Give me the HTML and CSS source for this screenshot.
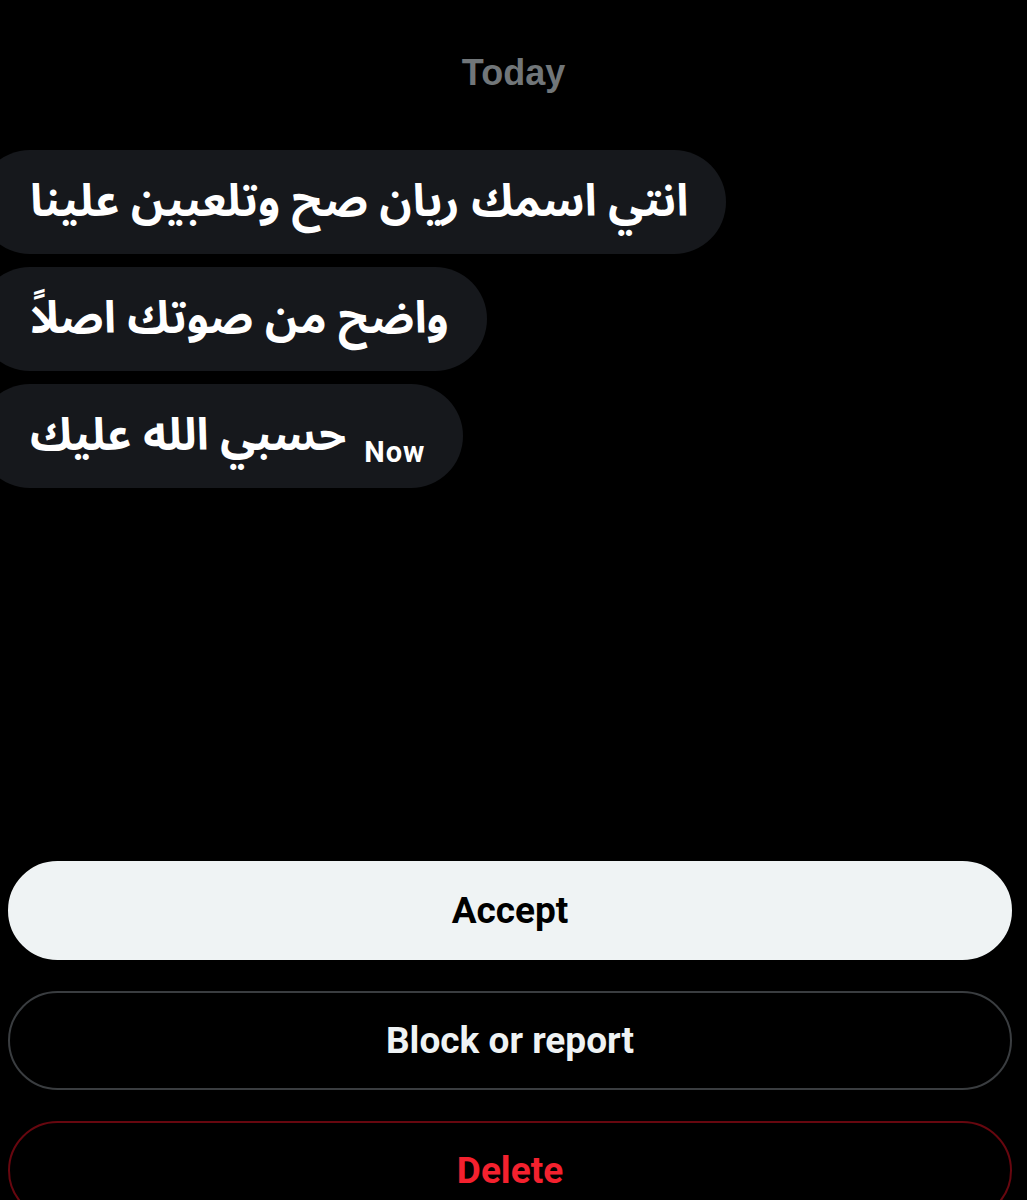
FILE: index.html
```html
<!DOCTYPE html>
<html lang="en">
<head>
    <meta charset="UTF-8">
    <meta name="viewport" content="width=device-width, initial-scale=1.0">
    <title>Message request</title>
    <link rel="stylesheet" href="styles.css">
</head>
<body>
    <div class="screen">
        <p class="day">Today</p>

        <div class="thread">
            <div class="bubble"><span class="msg">انتي اسمك ريان صح وتلعبين علينا</span></div>
            <div class="bubble"><span class="msg">واضح من صوتك اصلاً</span></div>
            <div class="bubble"><span class="time">Now</span><span class="msg">حسبي الله عليك</span></div>
        </div>

        <div class="actions">
            <button class="btn btn-accept">Accept</button>
            <button class="btn btn-block">Block or report</button>
            <button class="btn btn-delete">Delete</button>
        </div>
    </div>
</body>
</html>
```

FILE: styles.css
```css
* {
    margin: 0;
    padding: 0;
    box-sizing: border-box;
}
body {
    background-color: #000;
    overflow: hidden;
    font-family: Roboto, "Liberation Sans", sans-serif;
}
.screen {
    height: 1200px;
    display: flex;
    flex-direction: column;
}
.day {
    text-align: center;
    color: #717679;
    font-family: "Liberation Sans", Arial, sans-serif;
    font-size: 36px;
    font-weight: bold;
    padding-top: 52px;
    line-height: 42px;
}
.thread {
    display: flex;
    flex-direction: column;
    align-items: flex-start;
    gap: 13px;
    margin-top: 56px;
}
.bubble {
    direction: rtl;
    display: flex;
    align-items: baseline;
    gap: 18px;
    background-color: #16181c;
    border-radius: 52px;
    margin-left: -22px;
    padding: 0 38px 0 52px;
    height: 104px;
    line-height: 104px;
    color: #fff;
}
.msg {
    font-family: "Noto Sans Arabic", "DejaVu Sans", sans-serif;
    font-size: 44.5px;
    font-weight: bold;
}
.time {
    font-size: 29px;
    font-weight: bold;
    letter-spacing: 1px;
    position: relative;
    top: 12px;
}
.actions {
    display: flex;
    flex-direction: column;
    gap: 31px;
    margin-top: 373px;
    padding: 0 15px 0 8px;
}
.btn {
    height: 99px;
    border-radius: 50px;
    font-family: Roboto, "Liberation Sans", sans-serif;
    font-size: 37px;
    font-weight: bold;
    background-color: #000;
    border: 2px solid #3a3d40;
    color: #eff3f4;
}
.btn-accept {
    background-color: #eff3f4;
    border-color: #eff3f4;
    color: #000;
}
.btn-delete {
    border-color: #67070f;
    color: #f4212e;
}
```
